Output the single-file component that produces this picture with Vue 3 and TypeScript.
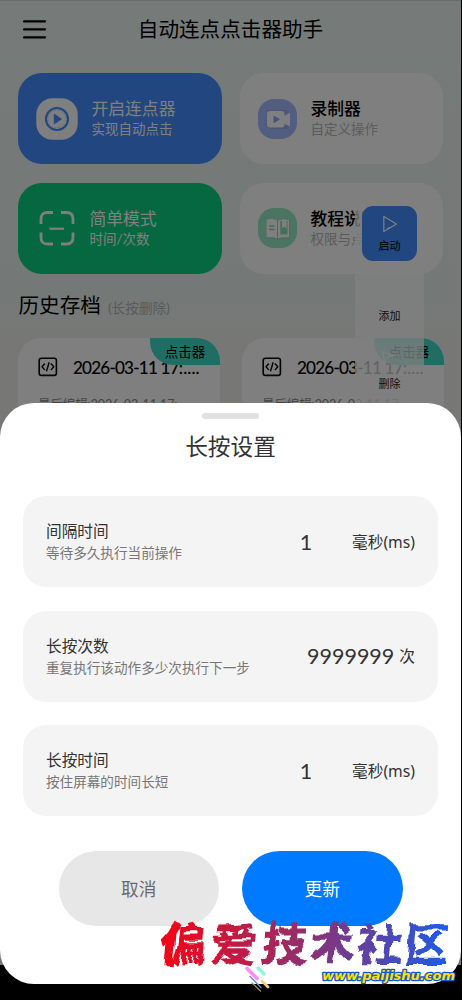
<script setup lang="ts">
interface Setting {
  title: string
  hint: string
  value: string
  unit: string
}

const settings: Setting[] = [
  { title: '间隔时间', hint: '等待多久执行当前操作', value: '1', unit: '毫秒(ms)' },
  { title: '长按次数', hint: '重复执行该动作多少次执行下一步', value: '9999999', unit: '次' },
  { title: '长按时间', hint: '按住屏幕的时间长短', value: '1', unit: '毫秒(ms)' },
]

const archives = [1, 2]
</script>

<template>
  <div class="phone">
    <div class="screen">
      <header class="header">
        <svg class="menu" width="23" height="20" viewBox="0 0 23 20">
          <path d="M1 2.4H22M1 10.4H22M1 18.4H22" stroke="#000" stroke-width="2.1" stroke-linecap="round" />
        </svg>
        <h1>自动连点点击器助手</h1>
      </header>

      <section class="modes">
        <div class="mode blue">
          <svg width="42" height="42" viewBox="0 0 42 42">
            <rect x=".3" y=".3" width="41.4" height="41.4" rx="16" fill="#fff" />
            <circle cx="21" cy="21" r="11" fill="none" stroke="#448cff" stroke-width="2.1" />
            <circle cx="21" cy="21" r="8.9" fill="#448cff" />
            <circle cx="21" cy="21" r="9" fill="#fff" />
            <path d="M18.3 16.2L25.3 21L18.3 25.8Z" fill="#448cff" stroke="#448cff" stroke-linejoin="round" />
          </svg>
          <div class="words"><b>开启连点器</b><span>实现自动点击</span></div>
        </div>
        <div class="mode white">
          <svg width="39" height="40" viewBox="0 0 39 40">
            <rect width="39" height="40" rx="16" fill="#a4bcff" />
            <rect x="8" y="11" width="24" height="19" rx="5" fill="#86a0e8" opacity=".5" />
            <rect x="9" y="12" width="17.5" height="16.5" rx="3" fill="#fff" />
            <path d="M26 17L32 13.5V27.5L26 24.5Z" fill="#fff" />
            <path d="M16 17.2L21.3 20.3L16 23.6Z" fill="#8ba8f5" stroke="#8ba8f5" stroke-linejoin="round" />
          </svg>
          <div class="words"><b>录制器</b><span>自定义操作</span></div>
        </div>
        <div class="mode green">
          <svg width="36" height="36" viewBox="0 0 36 36" fill="none" stroke="#fff" stroke-width="2.8">
            <path d="M2 14V9Q2 2.5 8.5 2.5H14M22 2.5H27.5Q34 2.5 34 9V14M34 22.5V27.5Q34 34 27.5 34H22M14 34H8.5Q2 34 2 27.5V22.5" />
            <path d="M10.5 18.7H25" stroke-width="2.2" />
          </svg>
          <div class="words"><b>简单模式</b><span>时间/次数</span></div>
        </div>
        <div class="mode white">
          <svg width="39" height="40" viewBox="0 0 39 40">
            <rect width="39" height="40" rx="16" fill="#96e8c6" />
            <path d="M8 12.5Q14 10 19.5 13Q25 10 31.5 12.5V31.5Q25 30 19.5 32Q14 30 8 31.5Z" fill="#7fc9ab" opacity=".5" />
            <path d="M8.5 12Q14 10 19 12.5V30.5Q14 28.5 8.5 29.5Z" fill="#fff" />
            <path d="M20 12.5Q22 11.5 31 12V29.5Q25 28.5 20 30.5Z" fill="#fff" />
            <path d="M22.3 13V26.5H29.5V13" fill="#8bdcba" />
            <path d="M24 11.3V20.5L26.3 18.7L28.6 20.5V11.5Z" fill="#fff" />
            <path d="M11 18H16.5M11 21.5H16.5" stroke="#84cfb0" stroke-width="1.4" />
          </svg>
          <div class="words"><b>教程说明</b><span>权限与点击</span></div>
        </div>
      </section>

      <div class="heading"><h2>历史存档</h2><span>(长按删除)</span></div>

      <section class="archives">
        <article v-for="n in archives" :key="n" class="archive">
          <div class="row">
            <svg width="20" height="20" viewBox="0 0 20 20" fill="none" stroke="#080808" stroke-width="1.6" stroke-linecap="round" stroke-linejoin="round">
              <rect x="1.2" y="1.2" width="17.2" height="17.2" rx="2.2" />
              <path d="M6.5 7L4 9.8L6.5 12.6M13.3 7L15.8 9.8L13.3 12.6M11 5.8L8.7 13.8" stroke-width="1.4" />
            </svg>
            <strong>2026-03-11 17<i>:....</i></strong>
          </div>
          <p>最后编辑:2026-03-11 17:</p>
          <span class="tag">点击器</span>
        </article>
      </section>

      <aside class="floater">
        <div class="start">
          <svg width="16" height="18" viewBox="0 0 16 18" fill="none" stroke="#fff" stroke-width="1.2" stroke-linejoin="round">
            <path d="M1.8 1.5L14.5 9L1.8 16.5Z" /><path d="M5 14L8 12.3" />
          </svg>
          <span>启动</span>
        </div>
        <span class="add">添加</span>
        <svg class="pointer" width="14" height="15" viewBox="0 0 14 15"><path d="M1.5 2L12 5.5L6.5 7.5L4 12.5Z" fill="none" stroke="#fff" stroke-width="1.4" /></svg>
        <span class="del">删除</span>
      </aside>
    </div>
    <div class="dim"></div>
    <div class="navbar"></div>

    <section class="sheet">
      <div class="handle"></div>
      <h3>长按设置</h3>
      <div class="list">
        <div v-for="s in settings" :key="s.title" class="setting">
          <div class="label"><b>{{ s.title }}</b><span>{{ s.hint }}</span></div>
          <div class="value">{{ s.value }}</div>
          <div class="unit">{{ s.unit }}</div>
        </div>
      </div>
      <div class="actions">
        <button class="cancel">取消</button>
        <button class="update">更新</button>
      </div>
    </section>

    <svg class="brand" width="312" height="90" viewBox="150 910 312 90">
      <defs>
        <linearGradient id="ink" gradientUnits="userSpaceOnUse" x1="160" y1="0" x2="448" y2="0">
          <stop offset="0" stop-color="#f50414" />
          <stop offset=".5" stop-color="#90306f" />
          <stop offset="1" stop-color="#1b5bea" />
        </linearGradient>
        <filter id="brush" x="-5%" y="-15%" width="110%" height="130%" color-interpolation-filters="sRGB">
          <feTurbulence type="fractalNoise" baseFrequency=".07" numOctaves="1" seed="4" result="n" />
          <feDisplacementMap in="SourceGraphic" in2="n" scale="9" xChannelSelector="R" yChannelSelector="G" />
        </filter>
      </defs>
      <g class="ink" fill="url(#ink)" filter="url(#brush)">
        <text transform="translate(0 961) skewX(-5)" y="0" x="160 210 261 308 356 403">偏爱技术社区</text>
      </g>
      <g stroke-linecap="round">
        <path d="M247 968.5L257 978.5" stroke="#ff8cf0" stroke-width="3.6" />
        <path d="M258 968L264 974" stroke="#8ff5e2" stroke-width="3.4" />
        <path d="M262 981L268 987" stroke="#f5cf80" stroke-width="2.8" />
        <path d="M250 976.5L261 987.5" stroke="#6488dc" stroke-width="1.3" />
        <path d="M252 983L260.5 991" stroke="#a18b62" stroke-width="1.2" />
      </g>
      <text class="url" x="322" y="979.5" textLength="133" lengthAdjust="spacingAndGlyphs">www.paijishu.com</text>
    </svg>
  </div>
</template>

<style>
body { margin: 0; background: #000; }
</style>

<style scoped>
* { box-sizing: border-box; }
.phone {
  position: relative; width: 462px; height: 1000px; overflow: hidden; background: #000;
  font-family: Lato, "Noto Sans CJK SC", sans-serif; color: #000;
}
h1, h2, h3, p { margin: 0; font-weight: 400; }
svg { display: block; flex: none; }
.screen {
  position: relative; width: 461px; height: 965px; overflow: hidden;
  background: linear-gradient(#ecf7f3 0, #e9f2ef 300px, #eff1ec 345px, #edeee8 100%);
  border-top: 1px solid #d4dad7;
}
.header { position: relative; height: 57px; padding: 18px 0 0 23px; }
.header h1 { position: absolute; left: 0; right: 0; top: 13px; text-align: center; font-size: 20.6px; line-height: 30px; }
.modes { display: grid; grid-template-columns: 203.5px 203.5px; grid-auto-rows: 91px; gap: 18.5px 18px; padding: 15px 0 0 18px; }
.mode { display: flex; align-items: center; gap: 13.5px; border-radius: 24px; padding-left: 18px; }
.words { display: flex; flex-direction: column; white-space: nowrap; }
.words b { font-weight: 400; font-size: 16.8px; line-height: 22px; }
.words span { font-size: 13.5px; line-height: 19px; }
.blue { background: #448cff; color: #fff; }
.green { background: #0ad082; color: #fff; gap: 15px; padding-left: 20.5px; }
.white { background: #fff; gap: 14px; }
.white b { font-weight: 500; }
.white span { color: #b8b8b8; }
.heading { display: flex; align-items: center; gap: 7px; padding: 17px 0 0 18.5px; height: 46px; }
.heading h2 { font-size: 20.6px; line-height: 28px; }
.heading span { font-size: 13.7px; line-height: 20px; color: #b3b6b2; padding-top: 6px; }
.archives { display: grid; grid-template-columns: 202px 202px; gap: 22px; padding: 18px 0 0 18px; }
.archive { position: relative; height: 140px; background: #fff; border-radius: 23px; padding: 19px 0 0 20px; }
.row { display: flex; align-items: center; gap: 15px; height: 21px; white-space: nowrap; }
.row strong { font-size: 17px; font-weight: 400; letter-spacing: -.75px; -webkit-text-stroke: .2px #000; }
.row i { font-style: normal; letter-spacing: .1px; }
.archive p { font-size: 12.5px; line-height: 18px; margin-top: 18px; color: #888; letter-spacing: -.1px; }
.tag {
  position: absolute; right: 0; top: 0; width: 70px; height: 27.5px; border-radius: 0 23px 0 23px;
  background: #40ddc6; font-size: 13.5px; line-height: 28px; text-align: center;
}
.floater {
  position: absolute; left: 355px; top: 199px; width: 69px; height: 240px;
  background: rgba(255, 255, 255, .78); font-size: 11px; text-align: center;
}
.start { width: 55px; height: 55px; margin: 6px auto 0 7px; border-radius: 11px; background: #448cff; padding-top: 9px; }
.start svg { margin: 0 auto; }
.start span { display: block; margin-top: 5px; line-height: 15px; }
.add, .del { display: block; line-height: 16px; color: #222; }
.add { margin-top: 47px; }
.pointer { margin: 26px 0 0 26px; }
.del { margin-top: 11px; }
.dim { position: absolute; inset: 0; background: rgba(0, 0, 0, .5); }
.navbar { position: absolute; left: 0; right: 0; bottom: 0; height: 35px; background: #000; }
.sheet {
  position: absolute; left: 0; top: 403px; width: 461px; height: 580.5px; border-radius: 34px;
  background: #fff; color: #333; padding-top: 9.5px;
}
.handle { width: 57px; height: 6.5px; border-radius: 4px; background: #e0e0e0; margin: 0 auto; }
h3 { font-size: 22.7px; line-height: 32px; text-align: center; margin-top: 12px; }
.list { display: grid; gap: 23.5px; padding: 0 23px; margin-top: 33px; }
.setting { display: flex; align-items: center; height: 91px; border-radius: 23px; background: #f4f4f4; padding: 0 23px; }
.label { flex: 1; display: flex; flex-direction: column; white-space: nowrap; }
.label b { font-size: 15.7px; line-height: 23px; font-weight: 400; }
.label span { font-size: 13.6px; line-height: 20px; color: #777; }
.value { min-width: 82px; text-align: center; font-size: 21.5px; margin-right: 5px; }
.unit { font-size: 15.7px; font-family: "Noto Sans", "Noto Sans CJK SC", sans-serif; line-height: 22px; }
.actions { display: flex; justify-content: center; gap: 23px; margin-top: 34.5px; }
button { width: 160.5px; height: 75px; border: 0; border-radius: 37.5px; font: 17.7px "Noto Sans CJK SC", sans-serif; }
.cancel { background: #e7e7e7; color: #6b6b6b; }
.update { background: #007bff; color: #fff; }
.brand { position: absolute; left: 150px; top: 910px; }
.ink { font: 900 45px "Noto Sans CJK SC", sans-serif; }
.url {
  font: italic bold 13px "DejaVu Sans", sans-serif; fill: #ffe100; stroke: #1456d8; stroke-width: 2.6px;
  paint-order: stroke; stroke-linejoin: round;
}
</style>
